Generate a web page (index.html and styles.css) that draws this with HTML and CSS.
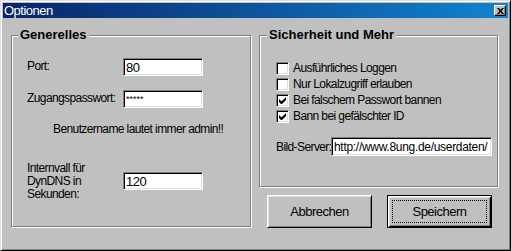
FILE: index.html
```html
<!DOCTYPE html>
<html lang="de">
<head>
    <meta charset="UTF-8">
    <title>Optionen</title>
    <link rel="stylesheet" href="styles.css">
</head>
<body>
    <div class="window">
        <div class="titlebar">
            <span class="title">Optionen</span>
            <span class="close">
                <svg width="7" height="6" viewBox="0 0 7 6"><path d="M0 0h2l1.5 2 1.5-2h2l-2.5 3 2.5 3h-2l-1.5-2-1.5 2h-2l2.5-3z" fill="#000"/></svg>
            </span>
        </div>
        <div class="content">
            <fieldset class="group group-general">
                <legend>Generelles</legend>
                <div class="field">
                    <label>Port:</label>
                    <input class="text" type="text" value="80">
                </div>
                <div class="field">
                    <label>Zugangspasswort:</label>
                    <input class="text pass" type="text" value="*****">
                </div>
                <p class="hint">Benutzername lautet immer admin!!</p>
                <div class="field field-multi">
                    <label>Internvall für<br>DynDNS in<br>Sekunden:</label>
                    <input class="text" type="text" value="120">
                </div>
            </fieldset>
            <div class="side">
                <fieldset class="group group-security">
                    <legend>Sicherheit und Mehr</legend>
                    <ul class="checks">
                        <li><span class="box"></span>Ausführliches Loggen</li>
                        <li><span class="box"></span>Nur Lokalzugriff erlauben</li>
                        <li><span class="box checked"><svg width="7" height="7" viewBox="0 0 7 7"><path d="M0 2v3l2 2h1l4-4v-3l-4 4h-1z" fill="#000"/></svg></span>Bei falschem Passwort bannen</li>
                        <li><span class="box checked"><svg width="7" height="7" viewBox="0 0 7 7"><path d="M0 2v3l2 2h1l4-4v-3l-4 4h-1z" fill="#000"/></svg></span>Bann bei gefälschter ID</li>
                    </ul>
                    <div class="server">
                        <label>Bild-Server:</label>
                        <input class="text wide" type="text" value="http://www.8ung.de/userdaten/">
                    </div>
                </fieldset>
                <div class="actions">
                    <button class="btn">Abbrechen</button>
                    <button class="btn btn-default"><span class="focus">Speichern</span></button>
                </div>
            </div>
        </div>
    </div>
</body>
</html>
```

FILE: styles.css
```css
body {
    margin: 0;
    background: #c0c0c0;
    font-family: "Liberation Sans", Arial, sans-serif;
    font-size: 12px;
    letter-spacing: -0.6px;
    color: #000;
}
.window {
    width: 511px;
    height: 251px;
    box-sizing: border-box;
    background: #c0c0c0;
    border: 1px solid;
    border-color: #dfdfdf #000 #000 #dfdfdf;
    box-shadow: inset 1px 1px #fff, inset -1px -1px #808080;
    padding: 2px;
}
.titlebar {
    height: 15px;
    display: flex;
    align-items: center;
    justify-content: space-between;
    background: linear-gradient(to right, #0a246a, #1084d0);
    color: #fff;
    padding: 0 2px 0 1px;
}
.title {
    font-size: 13px;
    letter-spacing: -0.5px;
    line-height: 15px;
}
.close {
    width: 12px;
    height: 11px;
    box-sizing: border-box;
    background: #c0c0c0;
    border: 1px solid;
    border-color: #fff #000 #000 #fff;
    box-shadow: inset -1px -1px #808080;
    display: flex;
    align-items: center;
    justify-content: center;
}
.content {
    display: flex;
    gap: 8px;
    padding: 9px 0 0 8px;
}
.group {
    margin: 0;
    padding: 0;
    min-width: 0;
    box-sizing: border-box;
    border: 1px solid #808080;
    box-shadow: inset 1px 1px #fff, 1px 1px #fff;
}
.group legend {
    font-weight: bold;
    font-size: 13px;
    letter-spacing: 0;
    line-height: 16px;
    padding: 0 2px;
    margin-left: -9px;
    background: #c0c0c0;
}
.group-general {
    width: 240px;
    height: 200px;
    padding: 15px 0 0 15px;
}
.group-security {
    width: 239px;
    height: 160px;
    padding: 17px 0 0 16px;
}
.group-security legend {
    margin-left: -9px;
}
.field {
    display: grid;
    grid-template-columns: 96px 80px;
    align-items: start;
    margin-bottom: 14px;
}
.field label {
    padding-top: 1px;
    line-height: 15px;
    white-space: nowrap;
}
.field-multi {
    align-items: center;
    margin: 24px 0 0;
}
.field-multi label {
    line-height: 13px;
}
.text {
    appearance: none;
    margin: 0;
    height: 18px;
    box-sizing: border-box;
    border: 1px solid;
    border-color: #808080 #fff #fff #808080;
    box-shadow: inset 1px 1px #000, inset -1px -1px #dfdfdf;
    background: #fff;
    padding: 0 2px;
    font-family: inherit;
    font-size: 13px;
    letter-spacing: -0.5px;
    color: #000;
    outline: none;
}
.pass {
    font-size: 9px;
    letter-spacing: 0;
}
.hint {
    margin: 0 0 0 26px;
    line-height: 15px;
    white-space: nowrap;
}
.checks {
    list-style: none;
    margin: 0;
    padding: 0;
}
.checks li {
    display: flex;
    align-items: center;
    gap: 4px;
    height: 16px;
    white-space: nowrap;
}
.box {
    width: 13px;
    height: 13px;
    box-sizing: border-box;
    border: 1px solid;
    border-color: #808080 #fff #fff #808080;
    box-shadow: inset 1px 1px #000, inset -1px -1px #dfdfdf;
    background: #fff;
    display: flex;
    align-items: center;
    justify-content: center;
}
.server {
    display: flex;
    align-items: center;
    margin-top: 13px;
}
.server label {
    width: 55px;
    flex-shrink: 0;
    white-space: nowrap;
}
.wide {
    width: 161px;
    height: 19px;
    padding: 0 2px;
    font-size: 12px;
    letter-spacing: -0.3px;
}
.actions {
    display: flex;
    gap: 15px;
    padding: 8px 0 0 8px;
}
.btn {
    width: 105px;
    height: 33px;
    margin: 0;
    padding: 0;
    box-sizing: border-box;
    background: #c0c0c0;
    border: 1px solid;
    border-color: #fff #000 #000 #fff;
    box-shadow: inset 1px 1px #dfdfdf, inset -1px -1px #808080;
    font-family: inherit;
    font-size: 13px;
    letter-spacing: -0.5px;
    color: #000;
}
.btn-default {
    border: 1px solid #000;
    box-shadow: inset 1px 1px #fff, inset -1px -1px #000, inset 2px 2px #dfdfdf, inset -2px -2px #808080;
    display: flex;
    padding: 4px;
}
.focus {
    flex: 1;
    display: flex;
    align-items: center;
    justify-content: center;
    border: 1px dotted #000;
}
```
